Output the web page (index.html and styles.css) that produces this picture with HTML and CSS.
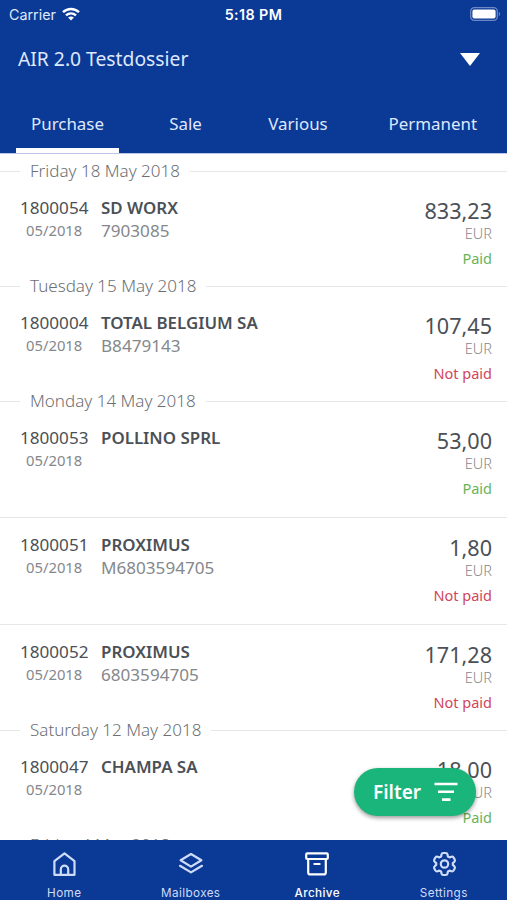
FILE: index.html
```
<!DOCTYPE html>
<html lang="en">
<head>
<meta charset="utf-8">
<title>Archive</title>
<link rel="stylesheet" href="styles.css">
</head>

<body>
<div class="app">

	<div class="header">
		<div class="status">
			<div class="carrier">
				<span>Carrier</span>
				<svg width="18" height="14" viewBox="0 0 18 14" fill="none" stroke="#fff" stroke-width="2.5">
					<path d="M1 5.2C5.6.9 12.4.9 17 5.2"/>
					<path d="M4 8.4c3-2.7 7-2.7 10 0"/>
					<path d="M9 13.4L6.1 10.5c1.7-1.5 4.1-1.5 5.8 0z" fill="#fff" stroke="none"/>
				</svg>
			</div>
			<div class="clock">5:18 PM</div>
			<div class="power">
				<svg width="31" height="14" viewBox="0 0 31 14">
					<rect x=".7" y=".7" width="26.6" height="12.6" rx="3.6" fill="none" stroke="#6c87c4" stroke-width="1.3"/>
					<rect x="2.4" y="2.4" width="23.2" height="9.2" rx="2" fill="#fff"/>
					<path d="M28.8 4.8c1.8.8 1.8 3.6 0 4.4z" fill="#6c87c4"/>
				</svg>
			</div>
		</div>
		<div class="dossier">
			<span>AIR 2.0 Testdossier</span>
			<svg width="20" height="13" viewBox="0 0 20 13"><path d="M0 0h20L10 13z" fill="#fff"/></svg>
		</div>
		<div class="tabs">
			<div class="tab active">Purchase</div>
			<div class="tab">Sale</div>
			<div class="tab">Various</div>
			<div class="tab">Permanent</div>
		</div>
	</div>

	<div class="list">
		<div class="date"><span>Friday 18 May 2018</span></div>
		<div class="item">
			<div class="doc"><div class="number">1800054</div><div class="period">05/2018</div></div>
			<div class="info"><div class="name">SD WORX</div><div class="ref">7903085</div></div>
			<div class="sum"><div class="amount">833,23</div><div class="currency">EUR</div><div class="paid">Paid</div></div>
		</div>

		<div class="date"><span>Tuesday 15 May 2018</span></div>
		<div class="item">
			<div class="doc"><div class="number">1800004</div><div class="period">05/2018</div></div>
			<div class="info"><div class="name">TOTAL BELGIUM SA</div><div class="ref">B8479143</div></div>
			<div class="sum"><div class="amount">107,45</div><div class="currency">EUR</div><div class="notpaid">Not paid</div></div>
		</div>

		<div class="date"><span>Monday 14 May 2018</span></div>
		<div class="item">
			<div class="doc"><div class="number">1800053</div><div class="period">05/2018</div></div>
			<div class="info"><div class="name">POLLINO SPRL</div></div>
			<div class="sum"><div class="amount">53,00</div><div class="currency">EUR</div><div class="paid">Paid</div></div>
		</div>
		<div class="item">
			<div class="doc"><div class="number">1800051</div><div class="period">05/2018</div></div>
			<div class="info"><div class="name">PROXIMUS</div><div class="ref">M6803594705</div></div>
			<div class="sum"><div class="amount">1,80</div><div class="currency">EUR</div><div class="notpaid">Not paid</div></div>
		</div>
		<div class="item">
			<div class="doc"><div class="number">1800052</div><div class="period">05/2018</div></div>
			<div class="info"><div class="name">PROXIMUS</div><div class="ref">6803594705</div></div>
			<div class="sum"><div class="amount">171,28</div><div class="currency">EUR</div><div class="notpaid">Not paid</div></div>
		</div>

		<div class="date"><span>Saturday 12 May 2018</span></div>
		<div class="item">
			<div class="doc"><div class="number">1800047</div><div class="period">05/2018</div></div>
			<div class="info"><div class="name">CHAMPA SA</div></div>
			<div class="sum"><div class="amount">18,00</div><div class="currency">EUR</div><div class="paid">Paid</div></div>
		</div>

		<div class="date"><span>Friday 4 May 2018</span></div>
	</div>

	<!-- floats over the list -->
	<div class="filter">
		<span>Filter</span>
		<svg width="24" height="20" viewBox="0 0 24 20" stroke="#fff" stroke-width="2.6">
			<path d="M.5 2h23M4 9.8h16M8 17.6h8.5"/>
		</svg>
	</div>

	<div class="nav">
		<div class="link">
			<svg width="26" height="26" viewBox="0 0 26 26">
				<path d="M3.4 10.2L13.5 2.4l10 7.8v13.6H3.4z"/>
				<path d="M9.8 23.8v-5.4a3.7 3.7 0 0 1 7.4 0v5.4"/>
			</svg>
			<span>Home</span>
		</div>
		<div class="link">
			<svg width="26" height="26" viewBox="0 0 26 26">
				<path d="M13 3l10.4 6.3L13 15.6 2.6 9.3z"/>
				<path d="M2 14.8l11 6.6 11-6.6"/>
			</svg>
			<span>Mailboxes</span>
		</div>
		<div class="link current">
			<svg width="26" height="26" viewBox="0 0 26 26">
				<rect x="2.2" y="2.4" width="21.6" height="5.6" rx="1"/>
				<path d="M4.2 8v13.4a2 2 0 0 0 2 2h13.6a2 2 0 0 0 2-2V8M10.4 13h5.2"/>
			</svg>
			<span>Archive</span>
		</div>
		<div class="link">
			<svg width="26" height="26" viewBox="0 0 26 26">
				<path d="M10.5 3.5Q10.8 2 12.3 2h2.4q1.5 0 1.8 1.5l.4 2 1.6.9 1.9-.7q1.4-.4 2.2.8l1.1 2q.7 1.3-.4 2.3l-1.5 1.3v1.800l1.500 1.300q1.100 1 .4 2.300l-1.100 2q-.8 1.200-2.200.8l-1.900-.7-1.600.9-.4 2q-.3 1.500-1.800 1.500h-2.400q-1.500 0-1.800-1.500l-.4-2-1.600-.9-1.900.7q-1.400.4-2.200-.8l-1.100-2q-.7-1.300.4-2.300l1.500-1.300v-1.800l-1.500-1.300q-1.100-1-.4-2.300l1.100-2q.8-1.200 2.200-.8l1.900.7 1.600-.9z"/>
				<circle cx="13.5" cy="13" r="3.7"/>
			</svg>
			<span>Settings</span>
		</div>
	</div>

</div>
</body>
</html>
```
FILE: styles.css
```
body {
	margin: 0;
	background: #fff;
	font-family: "Noto Sans", "Open Sans", sans-serif;
	color: #4b5056;
}
.app {
	position: relative;
	display: flex;
	flex-direction: column;
	height: 900px;
	overflow: hidden;
}

/* header */
.header {
	flex: none;
	box-sizing: border-box;
	height: 154px;
	background: #0b3996;
	border-bottom: 1px solid #bcc4ea;
	color: #dfe8fc;
}
.status {
	display: grid;
	grid-template-columns: 1fr auto 1fr;
	align-items: center;
	height: 28px;
	padding: 0 6px 0 9px;
	font-family: Inter, "Liberation Sans", sans-serif;
	font-size: 14.3px;
}
.carrier {
	display: flex;
	align-items: center;
	gap: 6px;
}
.clock {
	margin-right: 3px;
	font-weight: 600;
	letter-spacing: .4px;
	color: #fff;
}
.power {
	display: flex;
	justify-content: flex-end;
}
.dossier {
	display: flex;
	align-items: center;
	justify-content: space-between;
	height: 62px;
	padding: 0 27px 0 18px;
	font-size: 19.3px;
}
.dossier span {
	padding-bottom: 2px;
}
.tabs {
	display: grid;
	grid-template-columns: 103px 133px 92px 1fr;
	grid-template-rows: 63px;
	justify-items: center;
	height: 63px;
	padding: 0 0 0 16px;
	font-size: 16.9px;
}
.tab {
	box-sizing: border-box;
	line-height: 68px;
}
.tab:last-child {
	justify-self: end;
	padding-right: 30px;
}
.active {
	justify-self: stretch;
	height: 63px;
	text-align: center;
	border-bottom: 5px solid #fff;
}

/* document list */
.list {
	flex: 1;
	min-height: 0;
	overflow: hidden;
	padding-top: 8px;
}
.date {
	display: flex;
	align-items: center;
	height: 18px;
	font-size: 17px;
	font-weight: 300;
	line-height: 18px;
	color: #6c7074;
}
.date span {
	padding: 0 10px;
}
.date:before,
.date:after {
	content: "";
	width: 20px;
	height: 1px;
	background: #e6e7e9;
}
.date:after {
	flex: 1;
}
.item {
	display: flex;
	box-sizing: border-box;
	height: 97px;
	padding: 15px 15px 0 20px;
}
.item + .item {
	margin-top: 10px;
	border-top: 1px solid #e6e7e9;
	padding-top: 14px;
}
.doc {
	width: 81px;
}
.number {
	font-size: 17.1px;
	line-height: 25px;
}
.period {
	padding-left: 6px;
	font-size: 14.8px;
	line-height: 20px;
	color: #85888c;
}
.info {
	flex: 1;
}
.name {
	font-size: 16.9px;
	font-weight: 600;
	line-height: 25px;
}
.ref {
	font-size: 17.1px;
	line-height: 22px;
	color: #85888c;
}
.sum {
	padding-top: 3px;
	font-size: 14.5px;
	text-align: right;
}
.amount {
	font-size: 21.6px;
	line-height: 26px;
}
.currency {
	line-height: 18px;
	font-weight: 300;
	color: #85888c;
}
.paid {
	line-height: 32px;
	color: #68b359;
}
.notpaid {
	line-height: 32px;
	color: #d0455a;
}

.filter {
	position: absolute;
	right: 31px;
	bottom: 84px;
	display: flex;
	align-items: center;
	justify-content: space-between;
	box-sizing: border-box;
	width: 122px;
	height: 48px;
	padding: 0 18px 0 19px;
	border-radius: 24px;
	background: #1ab57b;
	box-shadow: 0 2px 4px rgba(0, 0, 0, .4);
	color: #fff;
	font-size: 19px;
	font-weight: 600;
}

/* bottom navigation */
.nav {
	flex: none;
	box-sizing: border-box;
	display: flex;
	height: 60px;
	padding-left: 1px;
	background: #0b3996;
	color: #cfdcf8;
	font-family: Inter, "Liberation Sans", sans-serif;
	font-size: 11.7px;
	letter-spacing: .4px;
}
.link {
	flex: 1;
	display: flex;
	flex-direction: column;
	align-items: center;
	gap: 9px;
	padding-top: 11px;
}
.link svg {
	fill: none;
	stroke: #cfdcf8;
	stroke-width: 2.2;
	stroke-linejoin: round;
	stroke-linecap: round;
}
.current {
	color: #fff;
	font-weight: 500;
}
.current svg {
	stroke: #fff;
}
```
